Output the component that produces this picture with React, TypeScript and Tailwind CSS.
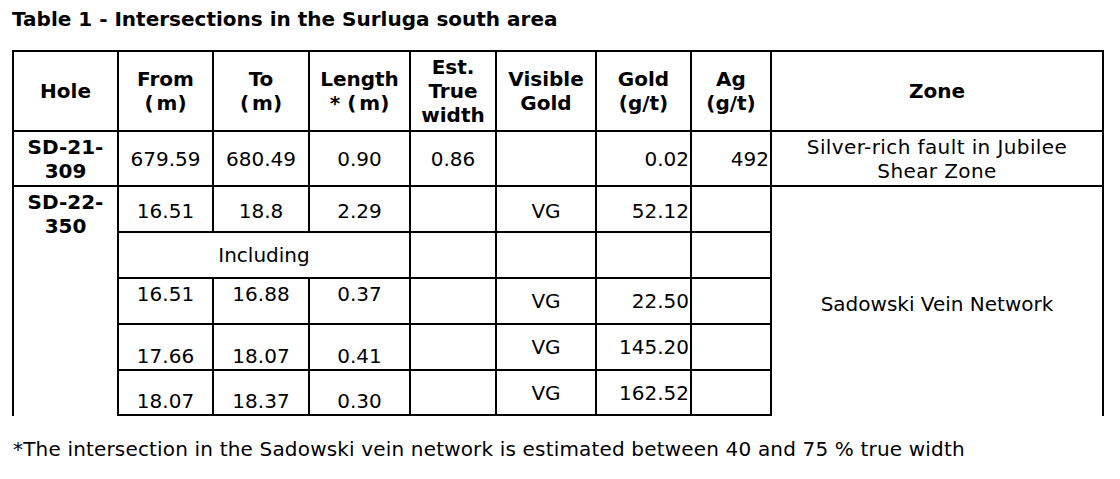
const cell = "border-r-2 border-b-2 border-black flex items-center justify-center text-center";
const head = cell + " font-bold";
const num = "border-r-2 border-b-2 border-black flex items-center justify-end pr-[1px]";

function M() {
  // the source puts a little air between "(" and "m"
  return (
    <>
      (<span className="ml-[3px]">m</span>)
    </>
  );
}

export default function App() {
  return (
    <div className="min-h-screen bg-white text-black font-['DejaVu_Sans',sans-serif] text-[20px] leading-[24px] pl-[12px] pt-[7px]">
      <h1 className="font-bold">Table 1 - Intersections in the Surluga south area</h1>

      <div className="mt-[19px] w-[1092px] grid grid-cols-[105px_95px_96px_101px_86px_100px_95px_80px_332px] grid-rows-[80px_55px_46px_46px_46px_46px_45px] border-l-2 border-t-2 border-black">
        {/* header */}
        <div className={head}>Hole</div>
        <div className={head}>
          <div>
            From
            <br />
            <M />
          </div>
        </div>
        <div className={head}>
          <div>
            To
            <br />
            <M />
          </div>
        </div>
        <div className={head}>
          <div>
            Length
            <br />* <M />
          </div>
        </div>
        <div className={head}>
          <div>
            Est.
            <br />
            True
            <br />
            width
          </div>
        </div>
        <div className={head}>
          <div>
            Visible
            <br />
            Gold
          </div>
        </div>
        <div className={head}>
          <div>
            Gold
            <br />
            (g/t)
          </div>
        </div>
        <div className={head}>
          <div>
            Ag
            <br />
            (g/t)
          </div>
        </div>
        <div className={head}>Zone</div>

        {/* SD-21-309 */}
        <div className={head}>
          <div>
            SD-21-
            <br />
            309
          </div>
        </div>
        <div className={cell}>679.59</div>
        <div className={cell}>680.49</div>
        <div className={cell}>0.90</div>
        <div className={cell}>0.86</div>
        <div className={cell}></div>
        <div className={num}>0.02</div>
        <div className={num}>492</div>
        <div className={cell + " tracking-[0.4px]"}>
          <div>
            Silver-rich fault in Jubilee
            <br />
            Shear Zone
          </div>
        </div>

        {/* SD-22-350 */}
        <div className="row-span-5 border-r-2 border-black flex justify-center text-center font-bold pt-[3px]">
          <div>
            SD-22-
            <br />
            350
          </div>
        </div>
        <div className={cell + " pt-[3px]"}>16.51</div>
        <div className={cell + " pt-[3px]"}>18.8</div>
        <div className={cell + " pt-[3px]"}>2.29</div>
        <div className={cell}></div>
        <div className={cell + " pt-[3px]"}>VG</div>
        <div className={num + " pt-[3px]"}>52.12</div>
        <div className={cell}></div>
        <div className="row-span-5 border-r-2 border-black flex items-center justify-center text-center pt-[4px]">
          Sadowski Vein Network
        </div>

        <div className={cell + " col-span-3"}>Including</div>
        <div className={cell}></div>
        <div className={cell}></div>
        <div className={cell}></div>
        <div className={cell}></div>

        <div className="border-r-2 border-b-2 border-black flex justify-center pt-[3px]">16.51</div>
        <div className="border-r-2 border-b-2 border-black flex justify-center pt-[3px]">16.88</div>
        <div className="border-r-2 border-b-2 border-black flex justify-center pt-[3px]">0.37</div>
        <div className={cell}></div>
        <div className={cell}>VG</div>
        <div className={num}>22.50</div>
        <div className={cell}></div>

        <div className="border-r-2 border-b-2 border-black flex items-end justify-center pb-[1px]">17.66</div>
        <div className="border-r-2 border-b-2 border-black flex items-end justify-center pb-[1px]">18.07</div>
        <div className="border-r-2 border-b-2 border-black flex items-end justify-center pb-[1px]">0.41</div>
        <div className={cell}></div>
        <div className={cell}>VG</div>
        <div className={num}>145.20</div>
        <div className={cell}></div>

        <div className="border-r-2 border-b-2 border-black flex items-end justify-center pb-[1px]">18.07</div>
        <div className="border-r-2 border-b-2 border-black flex items-end justify-center pb-[1px]">18.37</div>
        <div className="border-r-2 border-b-2 border-black flex items-end justify-center pb-[1px]">0.30</div>
        <div className={cell}></div>
        <div className={cell}>VG</div>
        <div className={num}>162.52</div>
        <div className={cell}></div>
      </div>

      <p className="mt-[21px] pl-[1px] tracking-[0.17px]">
        *The intersection in the Sadowski vein network is estimated between 40 and 75 % true width
      </p>
    </div>
  );
}
